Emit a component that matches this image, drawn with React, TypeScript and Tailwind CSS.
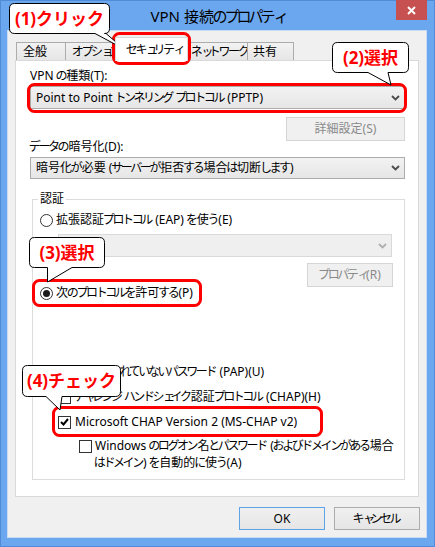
import React from 'react';

// Meiryo UI draws kana narrower than kanji; squeeze kana runs to match
const SMALL = 'ぁぃぅぇぉっゃゅょゎァィゥェォッャュョヮ';
function kind(ch: string) {
  if (SMALL.includes(ch)) return 2;
  const c = ch.charCodeAt(0);
  return c >= 0x3041 && c <= 0x30ff ? 1 : 0;
}

function J({ t }: { t: string }) {
  const runs: { k: number; s: string }[] = [];
  for (const ch of t) {
    const k = kind(ch);
    const last = runs[runs.length - 1];
    if (last && last.k === k) last.s += ch;
    else runs.push({ k, s: ch });
  }
  return (
    <>
      {runs.map((r, i) =>
        r.k === 0 ? (
          <React.Fragment key={i}>{r.s}</React.Fragment>
        ) : (
          <span key={i} className={r.k === 1 ? 'ml-[-0.1em] mr-[0.1em] tracking-[-0.2em]' : 'tracking-[-0.3em]'}>
            {r.s}
          </span>
        )
      )}
    </>
  );
}

function Chevron({ muted }: { muted?: boolean }) {
  return (
    <svg width="9" height="6" viewBox="0 0 9 6" className="shrink-0">
      <path d="M1 1 L4.5 4.5 L8 1" fill="none" stroke={muted ? '#b0b0b0' : '#4a4a4a'} strokeWidth="1.8" />
    </svg>
  );
}

function Dropdown({ text, disabled, className = '' }: { text?: string; disabled?: boolean; className?: string }) {
  const look = disabled
    ? 'border-[#d9d9d9] bg-[#efefef]'
    : 'border-[#acacac] bg-gradient-to-b from-[#f2f2f2] to-[#e6e6e6]';
  return (
    <div className={`flex items-center justify-between border pl-[5px] pr-[4px] ${look} ${className}`}>
      <span className="whitespace-nowrap">{text && <J t={text} />}</span>
      <Chevron muted={disabled} />
    </div>
  );
}

function Btn({ t, disabled, primary, className = '' }: { t: string; disabled?: boolean; primary?: boolean; className?: string }) {
  let look = 'border-[#acacac] bg-gradient-to-b from-[#f0f0f0] to-[#e5e5e5] text-black';
  if (disabled) look = 'border-[#d5d5d5] bg-[#f0f0f0] text-[#8a8a8a]';
  if (primary) look = 'border-[#5ea3e6] bg-gradient-to-b from-[#f0f0f0] to-[#e5e5e5] text-black';
  return (
    <div className={`flex items-center justify-center border whitespace-nowrap ${look} ${className}`}>
      <span>
        <J t={t} />
      </span>
    </div>
  );
}

function Radio({ checked }: { checked?: boolean }) {
  return (
    <span className="flex h-[13px] w-[13px] shrink-0 items-center justify-center rounded-full border border-[#333] bg-white">
      {checked && <span className="h-[7px] w-[7px] rounded-full bg-[#1b1b1b]" />}
    </span>
  );
}

function Check({ checked }: { checked?: boolean }) {
  return (
    <span className="flex h-[13px] w-[13px] shrink-0 items-center justify-center border border-[#333] bg-white">
      {checked && (
        <svg width="9" height="8" viewBox="0 0 9 8">
          <path d="M1 4 L3.5 6.5 L8 1" fill="none" stroke="#000" strokeWidth="2" />
        </svg>
      )}
    </span>
  );
}

// rounded speech box with its tail on the bottom edge
function bubble(x1: number, y1: number, x2: number, y2: number, b1: number, b2: number, tx: number, ty: number) {
  const r = 5;
  return `M${x1 + r} ${y1} H${x2 - r} Q${x2} ${y1} ${x2} ${y1 + r} V${y2 - r} Q${x2} ${y2} ${x2 - r} ${y2} H${b2} L${tx} ${ty} L${b1} ${y2} H${x1 + r} Q${x1} ${y2} ${x1} ${y2 - r} V${y1 + r} Q${x1} ${y1} ${x1 + r} ${y1} Z`;
}

const callouts = [
  { d: bubble(9.5, 3.5, 109.5, 33.5, 95, 106, 124, 49), text: '(1)クリック', box: 'left-[10px] top-[4px] w-[99px] h-[29px]' },
  { d: bubble(332.5, 42.5, 408.5, 72.5, 368, 388, 391, 85), text: '(2)選択', box: 'left-[333px] top-[43px] w-[75px] h-[29px]' },
  { d: bubble(29.5, 237.5, 104.5, 267.5, 47.5, 72, 47.5, 282), text: '(3)選択', box: 'left-[30px] top-[238px] w-[74px] h-[29px]' },
  { d: bubble(22.5, 365.5, 120.5, 396.5, 46, 62, 60, 410), text: '(4)チェック', box: 'left-[23px] top-[366px] w-[97px] h-[30px]' },
];

const tabIdle = 'h-[19px] overflow-hidden whitespace-nowrap border border-[#acacac] bg-gradient-to-b from-[#f2f2f2] to-[#e6e6e6] pt-px';

function Row({ t, checked, radio }: { t: string; checked?: boolean; radio?: boolean }) {
  return (
    <>
      {radio ? <Radio checked={checked} /> : <Check checked={checked} />}
      <span className={`whitespace-nowrap ${radio ? 'ml-[3px]' : 'ml-[4px]'}`}>
        <J t={t} />
      </span>
    </>
  );
}

export default function App() {
  return (
    <div className="relative flex h-[547px] w-[435px] flex-col overflow-hidden bg-[#6ba7ef] text-[12px] leading-[16px] text-black shadow-[inset_0_0_0_1px_#4f8bd6] font-['Noto_Sans','Noto_Sans_CJK_JP',sans-serif]">
      {/* title bar */}
      <div className="relative h-[30px] shrink-0">
        <div className="pt-[6px] text-center text-[15px] leading-[20px]">
          <J t="VPN 接続のプロパティ" />
        </div>
        <div className="absolute right-[8px] top-0 flex h-[20px] w-[31px] items-center justify-center bg-[#c75050]">
          <svg width="9" height="9" viewBox="0 0 9 9">
            <path d="M1 1 L8 8 M8 1 L1 8" stroke="#fff" strokeWidth="2" />
          </svg>
        </div>
      </div>

      {/* client area */}
      <div className="mb-[9px] ml-[7px] mr-[8px] flex flex-1 flex-col border border-[#c8ddf5] bg-[#f0f0f0] pl-[7px] pr-[7px] pt-[6px]">
        {/* tabs */}
        <div className="flex h-[24px] items-end pl-[1px]">
          <div className={`w-[50px] pl-[6px] ${tabIdle}`}>全般</div>
          <div className={`-ml-px w-[53px] pl-[7px] ${tabIdle}`}>
            <J t="オプション" />
          </div>
          <div className="relative z-10 -ml-[3px] h-[24px] w-[73px] overflow-hidden whitespace-nowrap border border-b-0 border-[#d9d9d9] bg-white pl-[11px] pt-[4px]">
            <J t="セキュリティ" />
          </div>
          <div className={`-ml-[3px] w-[63px] pl-[6px] ${tabIdle}`}>
            <J t="ネットワーク" />
          </div>
          <div className={`-ml-px w-[47px] pl-[5px] ${tabIdle}`}>共有</div>
        </div>

        {/* tab page */}
        <div className="relative z-0 -mt-px flex h-[437px] flex-col border border-[#d9d9d9] bg-white pl-[14px] pr-[13px] pt-[7px]">
          <div className="h-[16px]">
            <J t="VPN の種類(T):" />
          </div>
          <Dropdown className="mt-[2px] h-[23px]" text="Point to Point トンネリング プロトコル (PPTP)" />
          <div className="mt-[8px] flex justify-end">
            <Btn disabled className="h-[24px] w-[119px]" t="詳細設定(S)" />
          </div>
          <div className="-mt-[2px] h-[16px]">
            <J t="データの暗号化(D):" />
          </div>
          <Dropdown className="mt-[2px] h-[22px]" text="暗号化が必要 (サーバーが拒否する場合は切断します)" />

          <fieldset className="ml-[2px] mt-[12px] flex h-[289px] min-w-0 flex-col border border-[#dcdcdc] pl-[7px]">
            <legend className="-ml-[2px] px-[2px] leading-[16px]">認証</legend>
            <div className="mt-[5px] flex h-[16px] items-center">
              <Row radio t="拡張認証プロトコル (EAP) を使う(E)" />
            </div>
            <Dropdown disabled className="ml-[18px] mr-[12px] mt-[6px] h-[23px]" />
            <div className="mr-[11px] mt-[6px] flex justify-end">
              <Btn disabled className="h-[24px] w-[86px]" t="プロパティ(R)" />
            </div>
            <div className="-mt-[2px] flex h-[16px] items-center">
              <Row radio checked t="次のプロトコルを許可する(P)" />
            </div>

            <div className="ml-[18px] mt-[63px] flex h-[16px] items-center">
              <Row t="暗号化されていないパスワード (PAP)(U)" />
            </div>
            <div className="ml-[18px] mt-[9px] flex h-[16px] items-center">
              <Row t="チャレンジ ハンドシェイク認証プロトコル (CHAP)(H)" />
            </div>
            <div className="ml-[18px] mt-[9px] flex h-[16px] items-center">
              <Row checked t="Microsoft CHAP Version 2 (MS-CHAP v2)" />
            </div>
            <div className="ml-[39px] mt-[7px] flex items-start">
              <span className="mt-[3px]">
                <Check />
              </span>
              <span className="ml-[3px] whitespace-nowrap leading-[17px]">
                <J t="Windows のログオン名とパスワード (およびドメインがある場合" />
                <br />
                <J t="はドメイン) を自動的に使う(A)" />
              </span>
            </div>
          </fieldset>
        </div>

        {/* OK / cancel */}
        <div className="-mr-px mt-[10px] flex justify-end gap-[9px]">
          <Btn primary className="h-[23px] w-[86px]" t="OK" />
          <Btn className="h-[23px] w-[86px]" t="キャンセル" />
        </div>
      </div>

      {/* annotations */}
      <svg className="pointer-events-none absolute left-0 top-0" width="435" height="547">
        <rect x="113.5" y="33.5" width="76" height="30" rx="6" fill="none" stroke="#ff0000" strokeWidth="3" />
        <rect x="28.5" y="84.5" width="377" height="27" rx="6" fill="none" stroke="#ff0000" strokeWidth="3" />
        <rect x="33.5" y="280.5" width="167" height="25" rx="6" fill="none" stroke="#ff0000" strokeWidth="3" />
        <rect x="53.5" y="407.5" width="268" height="28" rx="6" fill="none" stroke="#ff0000" strokeWidth="3" />
        {callouts.map((c, i) => (
          <path key={i} d={c.d} fill="#fff" stroke="#000" strokeWidth="1" />
        ))}
      </svg>
      {callouts.map((c, i) => (
        <div key={i} className={`absolute flex items-center justify-center text-[17px] font-bold leading-[20px] text-[#ff0000] ${c.box}`}>
          {c.text}
        </div>
      ))}
    </div>
  );
}
